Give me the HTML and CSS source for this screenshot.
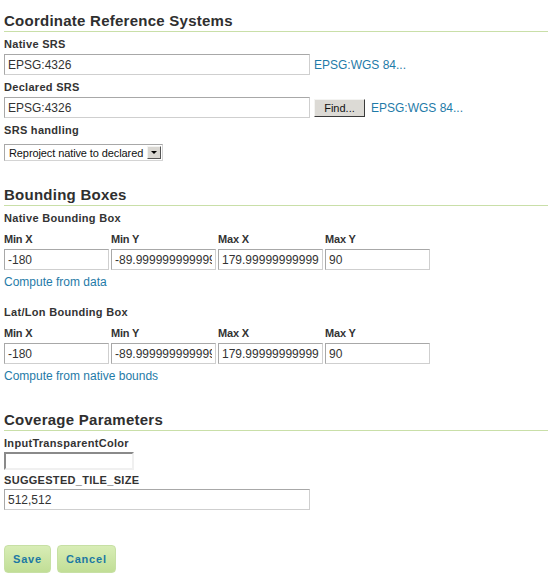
FILE: index.html
```html
<!DOCTYPE html>
<html>
<head>
<meta charset="utf-8">
<link rel="stylesheet" href="styles.css">
</head>
<body>
<div class="page">
  <h2 class="section-title">Coordinate Reference Systems</h2>
  <div class="field">
    <div class="label">Native SRS</div>
    <div class="row">
      <input class="text wide" type="text" value="EPSG:4326">
      <a class="link srs-link">EPSG:WGS 84...</a>
    </div>
  </div>
  <div class="field">
    <div class="label">Declared SRS</div>
    <div class="row">
      <input class="text wide" type="text" value="EPSG:4326">
      <button class="find-btn" type="button">Find...</button>
      <a class="link srs-link2">EPSG:WGS 84...</a>
    </div>
  </div>
  <div class="field">
    <div class="label">SRS handling</div>
    <div class="select">
      <span class="select-text">Reproject native to declared</span>
      <span class="select-arrow"><span class="tri"></span></span>
    </div>
  </div>

  <h2 class="section-title second">Bounding Boxes</h2>
  <div class="label">Native Bounding Box</div>
  <div class="bbox">
    <div class="bbox-head">Min X</div>
    <div class="bbox-head">Min Y</div>
    <div class="bbox-head">Max X</div>
    <div class="bbox-head">Max Y</div>
    <input class="text cell" type="text" value="-180">
    <input class="text cell" type="text" value="-89.99999999999999">
    <input class="text cell" type="text" value="179.99999999999997">
    <input class="text cell" type="text" value="90">
  </div>
  <a class="link compute">Compute from data</a>

  <div class="label bbox-title">Lat/Lon Bounding Box</div>
  <div class="bbox">
    <div class="bbox-head">Min X</div>
    <div class="bbox-head">Min Y</div>
    <div class="bbox-head">Max X</div>
    <div class="bbox-head">Max Y</div>
    <input class="text cell" type="text" value="-180">
    <input class="text cell" type="text" value="-89.99999999999999">
    <input class="text cell" type="text" value="179.99999999999997">
    <input class="text cell" type="text" value="90">
  </div>
  <a class="link compute">Compute from native bounds</a>

  <h2 class="section-title third">Coverage Parameters</h2>
  <div class="label">InputTransparentColor</div>
  <input class="color-input" type="text" value="">
  <div class="label tile-label">SUGGESTED_TILE_SIZE</div>
  <input class="text wide" type="text" value="512,512">

  <div class="actions">
    <button class="action-btn" type="button">Save</button>
    <button class="action-btn" type="button">Cancel</button>
  </div>
</div>
</body>
</html>
```
FILE: styles.css
```css
html, body {
  margin: 0;
  padding: 0;
  background: #fff;
}
.page {
  padding: 12px 0 0 4px;
  font-family: "Liberation Sans", Arial, sans-serif;
  color: #333;
}
.section-title {
  margin: 0;
  font-size: 15px;
  line-height: 18px;
  font-weight: bold;
  letter-spacing: 0.25px;
  padding-bottom: 1px;
  border-bottom: 1px solid #c9dfa8;
  color: #2f2f2f;
}
.section-title.second { margin-top: 25px; }
.section-title.third { margin-top: 27px; }
.label {
  margin-top: 5px;
  font-size: 11px;
  line-height: 14px;
  font-weight: bold;
  letter-spacing: 0.3px;
  color: #333;
}
.field .label { margin-bottom: 3px; }
.row {
  display: flex;
  align-items: center;
}
.text {
  box-sizing: border-box;
  height: 21px;
  margin: 0;
  padding: 0 3px;
  border: 1px solid #cfcfcf;
  border-top-color: #a8a8a8;
  border-left-color: #a8a8a8;
  font-family: "Liberation Sans", Arial, sans-serif;
  font-size: 12px;
  color: #333;
  background: #fff;
  outline: none;
}
.wide { width: 306px; }
.link {
  color: #1f7ba8;
  font-size: 12px;
  text-decoration: none;
}
.srs-link { margin-left: 4px; }
.find-btn {
  box-sizing: border-box;
  width: 51px;
  height: 18px;
  margin: 0 6px 0 4px;
  padding: 0;
  font-family: "Liberation Sans", Arial, sans-serif;
  font-size: 11px;
  color: #111;
  background: #dcdad5;
  border: 1px solid;
  border-color: #f4f4f2 #3a3a3a #3a3a3a #f4f4f2;
}
.select {
  display: inline-flex;
  align-items: center;
  box-sizing: border-box;
  width: 159px;
  height: 17px;
  margin-top: 4px;
  border: 1px solid #a8a8a8;
  border-right-color: #d4d4d4;
  border-bottom-color: #d4d4d4;
  font-size: 11px;
  color: #111;
  background: #fff;
}
.select-text {
  flex: 1;
  padding-left: 4px;
  white-space: nowrap;
  letter-spacing: -0.1px;
}
.select-arrow {
  box-sizing: border-box;
  width: 14px;
  height: 13px;
  margin-right: 1px;
  background: #d9d7d2;
  border: 1px solid;
  border-color: #f4f4f2 #555 #555 #f4f4f2;
  display: flex;
  align-items: center;
  justify-content: center;
}
.tri {
  width: 0;
  height: 0;
  border-left: 3px solid transparent;
  border-right: 3px solid transparent;
  border-top: 3px solid #000;
}
.bbox {
  display: grid;
  grid-template-columns: 107px 107px 107px 107px;
  row-gap: 3px;
  margin-top: 7px;
}
.bbox-head {
  font-size: 11px;
  line-height: 14px;
  font-weight: bold;
  letter-spacing: -0.2px;
  color: #333;
}
.cell {
  width: 105px;
  height: 21px;
  font-size: 12px;
}
.compute {
  display: block;
  margin-top: 4px;
  line-height: 16px;
}
.bbox-title { margin-top: 15px; }
.color-input {
  display: block;
  box-sizing: border-box;
  width: 130px;
  height: 18px;
  margin: 2px 0 0;
  padding: 0;
  border: 2px solid;
  border-color: #8a8a8a #f0f0f0 #f0f0f0 #8a8a8a;
  background: #fff;
  outline: none;
}
.tile-label { margin-top: 3px; margin-bottom: 2px; }
.actions {
  display: flex;
  gap: 6px;
  margin-top: 35px;
}
.action-btn {
  box-sizing: border-box;
  height: 28px;
  padding: 0 8px;
  border: 1px solid #c7e0a4;
  border-radius: 4px;
  background: linear-gradient(#d8edb6, #c1de96);
  font-family: "Liberation Sans", Arial, sans-serif;
  font-size: 11px;
  font-weight: bold;
  letter-spacing: 0.8px;
  color: #1b78a3;
}
```
